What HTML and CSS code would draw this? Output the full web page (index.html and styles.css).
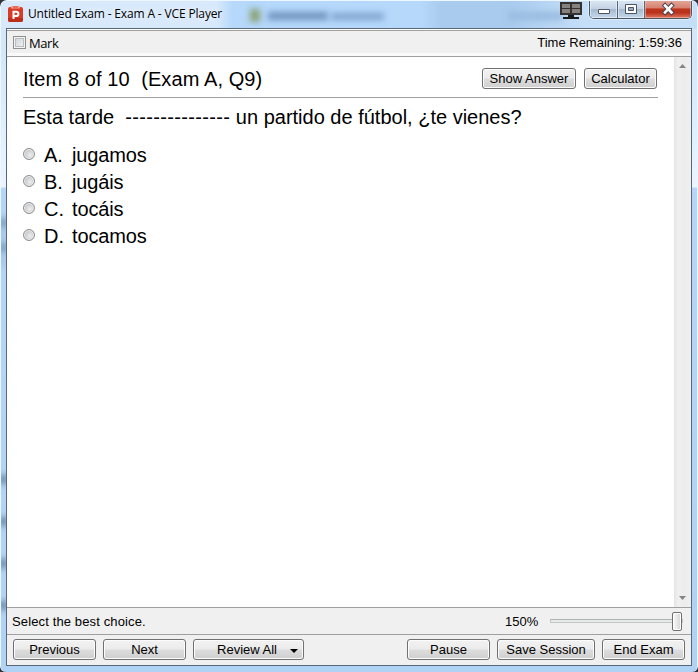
FILE: index.html
```html
<!DOCTYPE html>
<html lang="es">
<head>
<meta charset="utf-8">
<title>Untitled Exam - Exam A - VCE Player</title>
<link rel="stylesheet" href="styles.css">
</head>
<body>
<div class="window">
  <div class="glass" aria-hidden="true"><i class="smudge s1"></i><i class="smudge s2"></i><i class="smudge s3"></i><i class="smudge s4"></i><i class="smudge s5"></i><i class="smudge s6"></i></div>
  <header class="titlebar">
    <svg class="app-icon" width="15" height="16" viewBox="0 0 15 16"><rect y="1" width="15" height="15" rx="2" fill="#d83b25"/><path d="M0 12h15v2q0 2-2 2H2q-2 0-2-2z" fill="#bd2e1c"/><path d="M3 0h9v2.5H3z" fill="#f4a394"/><path d="M5 1h5" stroke="#d83b25"/><path d="M5.5 13V5.8h2.8a2 2 0 0 1 0 4.2H5.5" fill="none" stroke="#fff" stroke-width="2"/></svg>
    <h1 class="caption">Untitled Exam - Exam A - VCE Player</h1>
    <svg class="monitor" width="22" height="18" viewBox="0 0 22 18"><path d="M0 1h22v13H0z" fill="#35312f"/><path d="M2 3h8v4H2zM12 3h8v4h-8zM2 8h8v4H2zM12 8h8v4h-8z" fill="#85817e"/><path d="M8 14h6v2h5v2H3v-2h5z" fill="#191919"/></svg>
    <div class="controls">
      <button class="ctl min" aria-label="Minimize"><svg width="28" height="18"><rect x="8.500" y="9.500" width="11" height="4" rx=".5" fill="#fff" stroke="#4b5366"/></svg></button>
      <button class="ctl max" aria-label="Maximize"><svg width="27" height="18"><path d="M7.500 4.500h11v9h-11z" fill="#fff" stroke="#4b5366"/><path d="M10.500 7.500h5v3h-5z" fill="#9dabc8" stroke="#4b5366"/></svg></button>
      <button class="ctl close" aria-label="Close"><svg width="46" height="18"><path d="M20 5.500l6.500 7M26.500 5.500l-6.500 7" stroke="#4b4352" stroke-width="4.600" stroke-linecap="square"/><path d="M20 5.500l6.500 7M26.500 5.500l-6.500 7" stroke="#fff" stroke-width="2.600" stroke-linecap="square"/></svg></button>
    </div>
  </header>
  <main class="client">
    <div class="topbar">
      <label class="mark"><i class="checkbox"></i><span>Mark</span></label>
      <span class="time">Time Remaining: 1:59:36</span>
    </div>
    <div class="content">
      <section class="question">
        <div class="head"><h2>Item 8 of 10&nbsp; (Exam A, Q9)</h2>
          <div class="tools"><button class="btn show">Show Answer</button><button class="btn calc">Calculator</button></div></div>
        <p class="prompt">Esta tarde&nbsp; <span class="blank">---------------</span> un partido de fútbol, ¿te vienes?</p>
        <ul class="choices">
          <li><i class="radio"></i><span class="letter">A.</span><span>jugamos</span></li>
          <li><i class="radio"></i><span class="letter">B.</span><span>jugáis</span></li>
          <li><i class="radio"></i><span class="letter">C.</span><span>tocáis</span></li>
          <li><i class="radio"></i><span class="letter">D.</span><span>tocamos</span></li>
        </ul>
      </section>
      <div class="scrollbar"><svg width="7" height="4"><path d="M0 4L3.500 0 7 4z" fill="#858585"/></svg><svg width="7" height="4"><path d="M0 0l3.500 4L7 0z" fill="#858585"/></svg></div>
    </div>
    <div class="status"><span class="hint">Select the best choice.</span><span class="percent">150%</span><div class="slider"><i class="thumb"></i></div></div>
    <footer class="actions">
      <button class="btn">Previous</button><button class="btn">Next</button>
      <button class="btn review"><span>Review All</span><svg width="8" height="4"><path d="M0 0h8L4 4z"/></svg></button>
      <button class="btn pause">Pause</button><button class="btn save">Save Session</button><button class="btn">End Exam</button>
    </footer>
  </main>
</div>
</body>
</html>
```
FILE: styles.css
```css
* { box-sizing: border-box; }
body { margin: 0; width: 698px; height: 672px; overflow: hidden; background: #30363d; color: #000; font-family: "Liberation Sans", Arial, sans-serif; }
h1, h2, p, ul { margin: 0; padding: 0; font-weight: 400; }
button { font: inherit; color: inherit; padding: 0; margin: 0; }
svg { display: block; flex: none; }
.window { position: relative; width: 698px; height: 672px; padding: 0 5px 6px; border: solid #eef7ff; border-width: 1px 1px 0; border-radius: 7px 7px 6px 6px; overflow: hidden; background: linear-gradient(#d4e6f8 0, #d5e8fb 60px, #e9f4ff 180px, #edf6ff 186px, #b5d6f8 187px, #b0d2f5 100%); }
.glass { position: absolute; inset: 0; background: linear-gradient(90deg, #d8e9fb 0 215px, #b5d8fb 232px 420px, #a9cbee 440px 510px, #c6dff8 585px 100%) 0 0 / 100% 28px no-repeat; }
.smudge { position: absolute; filter: blur(3px); }
.s1 { left: 249px; top: 8px; width: 10px; height: 13px; background: #8ba275; }
.s2 { left: 267px; top: 11px; width: 60px; height: 8px; background: #6f93be; }
.s3 { left: 330px; top: 12px; width: 53px; height: 7px; background: #7fa4ce; }
.s4 { left: 507px; top: 11px; width: 55px; height: 8px; background: #98bbdf; }
.s5 { left: -2px; top: 217px; width: 9px; height: 50px; background: repeating-linear-gradient(#789bbd 0 8px, #a8c9ea 10px 25px); }
.s6 { left: -2px; top: 474px; width: 9px; height: 135px; background: repeating-linear-gradient(#6788a9 0 8px, #b3d4f6 10px 42px); }
.titlebar { position: relative; height: 27px; display: flex; align-items: flex-start; }
.app-icon { margin: 5px 0 0 2px; }
.caption { margin: 4px 0 0 5px; font: 12px/17px "Open Sans", sans-serif; width: 197px; white-space: nowrap; letter-spacing: -.15px; text-shadow: 0 0 6px #fff; }
.monitor { margin: 0 0 0 auto; }
.controls { display: flex; width: 103px; height: 19px; margin: -1px 0 0 7px; border: 1px solid #4c5561; border-top: 0; border-radius: 0 0 5px 5px; overflow: hidden; box-shadow: 0 0 0 1px #e5f3ffaa; }
.ctl { height: 18px; border: 0; background: linear-gradient(#dbe7f4 0, #c4d3e4 48%, #a4b8ce 50%, #c5d7e9 100%); box-shadow: inset 0 0 0 1px #eaf3fbaa; }
.min { width: 28px; border-right: 1px solid #5b6573; }
.max { width: 27px; border-right: 1px solid #5b6573; }
.close { width: 46px; background: linear-gradient(#e5a89b 0, #d6816f 45%, #bd351e 49%, #b8311b 70%, #e1775d 100%); box-shadow: inset 0 0 0 1px #f3bfb499; }
.client { position: relative; display: flex; flex-direction: column; height: 638px; border: 1px solid #596779; background: #f0f0f0; }
.topbar { height: 28px; padding: 1px 9px 3px 6px; border-top: 1px solid #fff; border-bottom: 1px solid #a0a0a0; display: flex; justify-content: space-between; align-items: center; font-size: 13px; box-shadow: inset 0 1px #a0a0a0, inset 0 -3px #fafafa; }
.mark { display: flex; align-items: center; gap: 3px; font: 13px/18px "Open Sans", sans-serif; letter-spacing: -.4px; }
.mark span { padding-top: 1px; }
.checkbox { width: 13px; height: 13px; border: 1px solid #8e8f8f; background: linear-gradient(135deg, #cbcfd5, #f6f6f6); box-shadow: inset 0 0 0 1px #f4f4f4, inset 0 0 0 2px #b8bdc4; }
.time { white-space: nowrap; }
.content { height: 551px; display: flex; background: #fff; border-bottom: 1px solid #a0a0a0; }
.question { flex: 1; padding: 0 16px; }
.head { height: 41px; border-bottom: 1px solid #a0a0a0; display: flex; justify-content: space-between; align-items: flex-start; padding-top: 11px; padding-right: 1px; }
h2, .prompt, .choices { font-size: 20px; line-height: 24px; }
h2, .prompt { white-space: pre; }
h2 { margin-top: -1px; letter-spacing: .1px; }
.tools { display: flex; gap: 8px; }
.prompt { margin-top: 7px; letter-spacing: 0; }
.blank { letter-spacing: .34px; }
.choices { list-style: none; margin-top: 12px; letter-spacing: -.15px; }
.choices li { height: 27px; display: flex; align-items: center; }
.radio { width: 12px; height: 12px; margin: 0 9px 1px 0; border: 1px solid #8e8f8f; border-radius: 50%; background: radial-gradient(circle at 60% 60%, #eee 0, #c5c8cc 65%); box-shadow: inset 0 0 0 1px #eee; }
.letter { width: 28px; letter-spacing: 0; }
.scrollbar { width: 17px; background: linear-gradient(90deg, #e4e4e4, #f0f0f0 25%, #ececec 65%, #f0f0f0); display: flex; flex-direction: column; justify-content: space-between; align-items: center; padding: 7px 0; }
.status { height: 27px; border-bottom: 1px solid #a0a0a0; display: flex; align-items: center; padding: 0 8px 0 5px; font-size: 13px; }
.hint { letter-spacing: .13px; }
.percent { margin-left: auto; width: 45px; }
.slider { width: 133px; height: 4px; border: 1px solid #c2c8c5; border-top-color: #adb3b0; background: #e7eae7; display: flex; justify-content: flex-end; align-items: center; }
.thumb { width: 10px; height: 19px; flex: none; border: 1px solid #707070; border-radius: 2px; background: linear-gradient(90deg, #fafafa, #d5d5d5); box-shadow: inset 0 0 0 1px #fff; }
.actions { display: flex; gap: 7px; padding: 4px 6px 0; }
.btn { width: 83px; height: 21px; border: 1px solid #707070; border-radius: 3px; background: linear-gradient(#f2f2f2 0, #ebebeb 49%, #dddddd 51%, #cfcfcf 100%); box-shadow: inset 0 0 0 1px #fcfcfc; font-size: 13px; line-height: 18px; white-space: nowrap; }
.show { width: 94px; }
.calc { width: 73px; }
.review { width: 111px; display: flex; align-items: center; justify-content: flex-end; gap: 13px; padding-right: 5px; }
.review span { padding-top: 1px; }
.review svg { margin-top: 2px; }
.pause { margin-left: auto; }
.save { width: 98px; }
```
